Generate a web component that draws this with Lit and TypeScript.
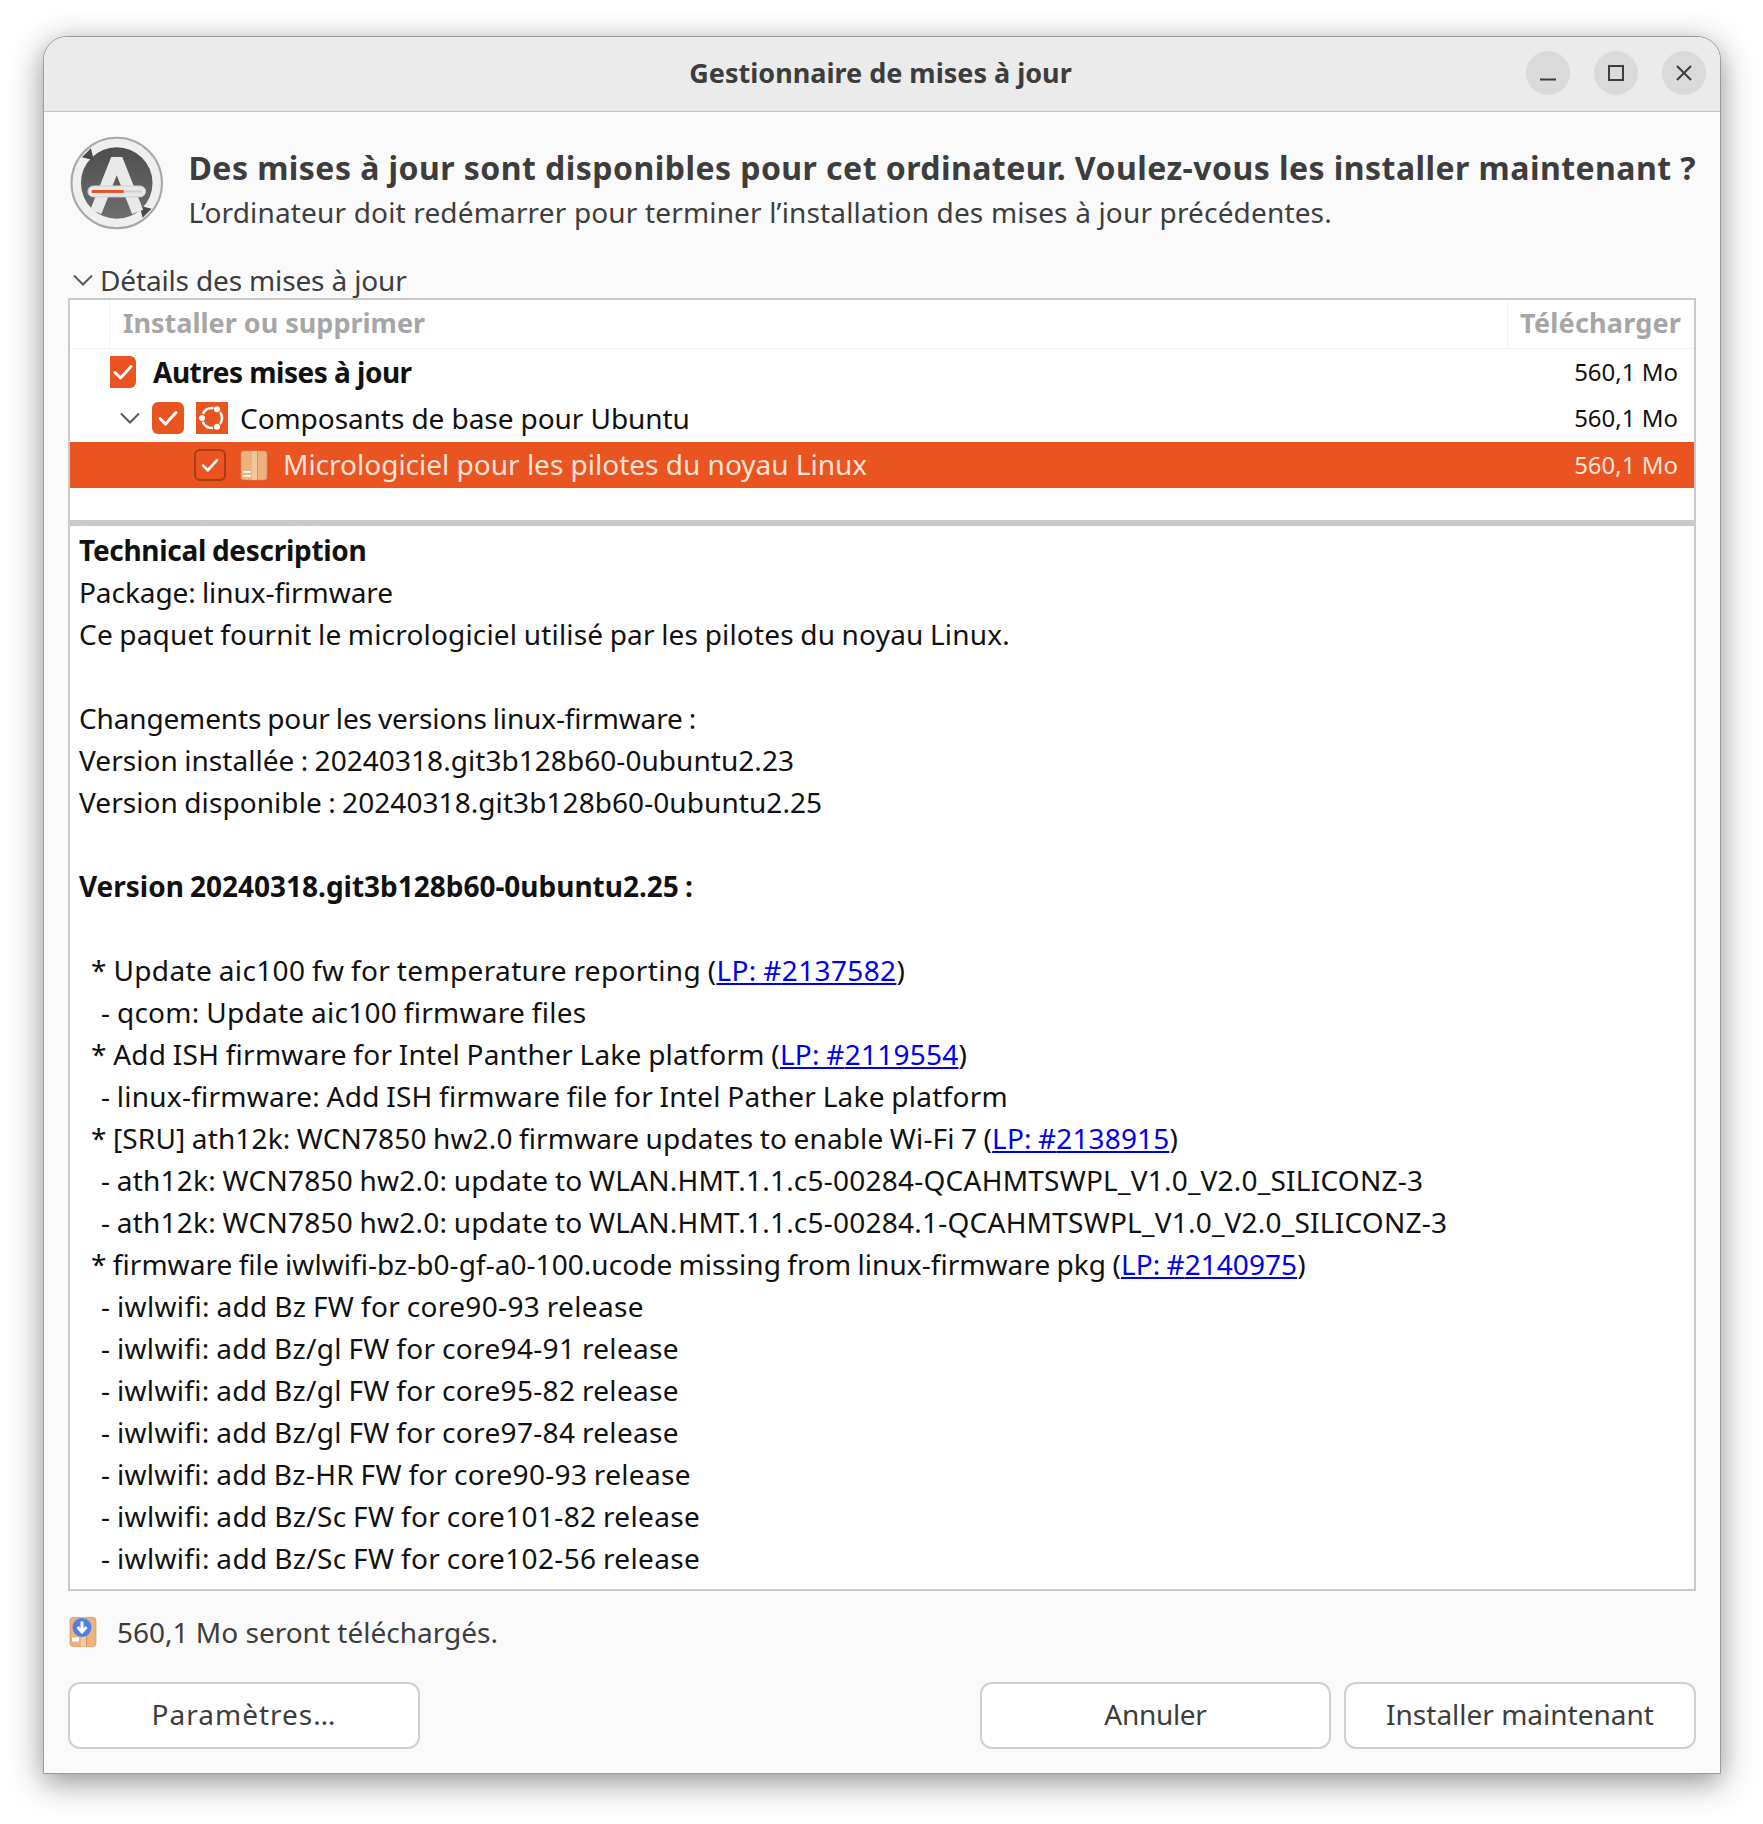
import { LitElement, css, html, svg } from 'lit';
import { customElement } from 'lit/decorators.js';

const lp = (n: string) => html`<a href="#">LP: #${n}</a>`;

const check = svg`<path d="M8 16.5l5.5 5.5L24 10.5" fill="none" stroke="#fff" stroke-width="3" stroke-linecap="round" stroke-linejoin="round"/>`;

const chevron = html`<svg class="chev" width="20" height="12" viewBox="0 0 20 12"><path d="M1 1.5l9 9 9-9" fill="none" stroke="#5a5a5a" stroke-width="2"/></svg>`;

const pkg = svg`
   <rect x="1" y="1" width="26" height="29" rx="3" fill="#eeb27e" stroke="#c98d5c" stroke-opacity=".6"/>
   <rect x="12" y="1" width="5" height="29" fill="#f3c79d"/>
   <rect x="17" y="1" width="1" height="29" fill="#cf935f"/>`;

// lines of the technical description, ls = letter-spacing to fit the line width
const details = [
   { ls: -0.3, t: html`<b>Technical description</b>` },
   { ls: -0.07, t: html`Package: linux-firmware` },
   { ls: 0.18, t: html`Ce paquet fournit le micrologiciel utilisé par les pilotes du noyau Linux.` },
   { t: '' },
   { ls: -0.15, t: html`Changements pour les versions linux-firmware :` },
   { ls: 0.05, t: html`Version installée : 20240318.git3b128b60-0ubuntu2.23` },
   { ls: 0.07, t: html`Version disponible : 20240318.git3b128b60-0ubuntu2.25` },
   { t: '' },
   { ls: -0.02, t: html`<b>Version 20240318.git3b128b60-0ubuntu2.25 :</b>` },
   { t: '' },
   { i: 1, ls: 0.36, t: html`* Update aic100 fw for temperature reporting (${lp('2137582')})` },
   { i: 2, ls: 0.29, t: html`- qcom: Update aic100 firmware files` },
   { i: 1, ls: 0.25, t: html`* Add ISH firmware for Intel Panther Lake platform (${lp('2119554')})` },
   { i: 2, ls: 0.25, t: html`- linux-firmware: Add ISH firmware file for Intel Pather Lake platform` },
   { i: 1, ls: 0.14, t: html`* [SRU] ath12k: WCN7850 hw2.0 firmware updates to enable Wi-Fi 7 (${lp('2138915')})` },
   { i: 2, ls: 0.23, t: html`- ath12k: WCN7850 hw2.0: update to WLAN.HMT.1.1.c5-00284-QCAHMTSWPL_V1.0_V2.0_SILICONZ-3` },
   { i: 2, ls: 0.23, t: html`- ath12k: WCN7850 hw2.0: update to WLAN.HMT.1.1.c5-00284.1-QCAHMTSWPL_V1.0_V2.0_SILICONZ-3` },
   { i: 1, ls: 0.05, t: html`* firmware file iwlwifi-bz-b0-gf-a0-100.ucode missing from linux-firmware pkg (${lp('2140975')})` },
   { i: 2, ls: 0.35, t: html`- iwlwifi: add Bz FW for core90-93 release` },
   { i: 2, ls: 0.33, t: html`- iwlwifi: add Bz/gl FW for core94-91 release` },
   { i: 2, ls: 0.33, t: html`- iwlwifi: add Bz/gl FW for core95-82 release` },
   { i: 2, ls: 0.33, t: html`- iwlwifi: add Bz/gl FW for core97-84 release` },
   { i: 2, ls: 0.32, t: html`- iwlwifi: add Bz-HR FW for core90-93 release` },
   { i: 2, ls: 0.34, t: html`- iwlwifi: add Bz/Sc FW for core101-82 release` },
   { i: 2, ls: 0.34, t: html`- iwlwifi: add Bz/Sc FW for core102-56 release` },
];

@customElement('app-root')
export class AppRoot extends LitElement {
   static get styles() {
      return css`
         :host {
            display: block;
            padding: 36px 42px 50px 43px;
            background: #fff;
            font-family: 'Noto Sans', sans-serif;
            font-size: 28px;
            color: #3d3d3d;
         }

         .window {
            width: 1678px;
            height: 1738px;
            box-sizing: border-box;
            display: flex;
            flex-direction: column;
            background: #fafafa;
            border: 1.5px solid #9c9c9c;
            border-radius: 24px 24px 0 0;
            box-shadow: 0 8px 32px rgba(0, 0, 0, 0.45);
         }

         .titlebar {
            height: 74px;
            flex: none;
            box-sizing: content-box;
            display: flex;
            align-items: center;
            justify-content: center;
            position: relative;
            background: #ebebeb;
            border-bottom: 1.5px solid #c4c4c4;
            border-radius: 23px 23px 0 0;
            font-weight: 700;
            font-size: 27px;
         }

         .title {
            margin: 0 3px 4px 0;
         }

         .winbtns {
            position: absolute;
            right: 14px;
            top: 14px;
            display: flex;
            gap: 24px;
         }

         .winbtn {
            width: 44px;
            height: 44px;
            border-radius: 50%;
            background: #dadada;
            display: flex;
            align-items: center;
            justify-content: center;
         }

         .content {
            flex: 1;
            min-height: 0;
            display: flex;
            flex-direction: column;
            padding: 24px 24px 24px 24px;
         }

         .head {
            display: flex;
            gap: 25px;
            height: 110px;
            flex: none;
            margin-left: 2px;
         }

         .head-text {
            display: flex;
            flex-direction: column;
            padding-top: 10px;
         }

         h1 {
            margin: 0;
            font-size: 32px;
            line-height: 44px;
            font-weight: 700;
            letter-spacing: 0.45px;
            white-space: nowrap;
         }

         .sub {
            font-size: 28px;
            line-height: 40px;
            margin-top: 2px;
            letter-spacing: 0.16px;
         }

         .expander {
            display: flex;
            align-items: center;
            gap: 7px;
            height: 36px;
            margin-top: 16px;
            font-size: 28px;
            padding-left: 5px;
            letter-spacing: -0.15px;
         }

         .listbox {
            flex: none;
            height: 222px;
            box-sizing: border-box;
            background: #fff;
            border: 2px solid #c9c9c9;
            border-bottom: none;
         }

         .thead {
            display: flex;
            height: 49px;
            box-sizing: border-box;
            border-bottom: 1px solid #f4f4f4;
            color: #a6a6a6;
            font-weight: 700;
            font-size: 27px;
            line-height: 46px;
         }

         .th-first {
            width: 39px;
            border-right: 1px solid #f4f4f4;
         }

         .th-name {
            flex: 1;
            padding-left: 13px;
         }

         .th-size {
            width: 187px;
            padding-right: 13px;
            box-sizing: border-box;
            text-align: right;
            border-left: 1px solid #f4f4f4;
            letter-spacing: 0.2px;
         }

         .row {
            display: flex;
            align-items: center;
            height: 46px;
            color: #111;
         }

         .row.selected {
            background: #e95420;
            color: #fde3d8;
         }

         .row .name {
            flex: 1;
            white-space: nowrap;
            padding-bottom: 1px;
         }

         .row .size {
            font-size: 24px;
            font-weight: 400;
            padding: 0 16px 2px 0;
         }

         .r1 {
            padding-left: 40px;
         }

         .r1 .name {
            font-weight: 700;
            letter-spacing: -0.5px;
         }

         .r2 {
            padding-left: 50px;
            margin-bottom: 1px;
         }

         .r2 .name {
            letter-spacing: -0.07px;
         }

         .r3 {
            padding-left: 124px;
         }

         .r3 .name {
            padding-bottom: 3px;
         }

         .cb {
            flex: none;
            width: 32px;
            height: 32px;
            border-radius: 6px;
            background: #e95420;
         }

         .cb.clip {
            width: 26px;
            border-radius: 0 6px 6px 0;
         }

         .cb.sel {
            box-sizing: border-box;
            border: 2px solid #a83c14;
         }

         .r1 .cb {
            margin-right: 17px;
         }

         .r2 .chev {
            margin-right: 12px;
         }

         .r2 .cb {
            margin-right: 12px;
         }

         .r2 svg.ico {
            margin-right: 12px;
         }

         .r3 .cb {
            margin-right: 14px;
         }

         .r3 svg.ico {
            margin-right: 15px;
         }

         .sash {
            flex: none;
            height: 6px;
            background: #c9c9c9;
         }

         .textview {
            flex: 1;
            min-height: 0;
            overflow: hidden;
            background: #fff;
            border: 2px solid #c9c9c9;
            border-top: none;
            padding: 3px 9px;
            color: #111;
            font-size: 28px;
            line-height: 42px;
            word-spacing: -1px;
         }

         .line {
            height: 42px;
            white-space: nowrap;
         }

         .i1 {
            padding-left: 12px;
         }

         .i2 {
            padding-left: 22px;
         }

         a {
            color: #0000ee;
         }

         .status {
            flex: none;
            display: flex;
            align-items: center;
            gap: 20px;
            height: 91px;
            box-sizing: border-box;
            padding: 0 0 9px 1px;
         }

         .buttons {
            flex: none;
            display: flex;
         }

         button {
            width: 351px;
            height: 67px;
            border: 2px solid #cfcfcf;
            border-radius: 12px;
            background: #fff;
            font: inherit;
            color: #3d3d3d;
            padding: 0 0 3px;
         }

         .wide {
            width: 352px;
            letter-spacing: 1px;
         }

         .tight {
            letter-spacing: -0.3px;
            margin-right: 13px;
         }

         .install {
            width: 352px;
         }

         .spacer {
            flex: 1;
         }
      `;
   }

   renderLogo() {
      return html`<svg width="94" height="94" viewBox="0 0 94 94">
         <defs>
            <linearGradient id="disc" x1="0" y1="0" x2="0" y2="1">
               <stop offset="0" stop-color="#4e4e4e" />
               <stop offset="1" stop-color="#6e6e6e" />
            </linearGradient>
         </defs>
         <circle cx="47" cy="47" r="45.5" fill="#efefef" stroke="#a8a8a8" stroke-width="2" />
         <circle cx="47" cy="47" r="36" fill="url(#disc)" />
         <path d="M12 21l9-9 3 12z M82 73l-9 9-3-12z" fill="#4a4a4a" />
         <path d="M26 76L47 23L68 76" stroke="#e9e9e9" stroke-width="12" stroke-linejoin="bevel" fill="none" />
         <rect x="18" y="50" width="58" height="11" rx="5.5" fill="#e8e8e8" stroke="#cfcfcf" />
         <rect x="22" y="54.500" width="50" height="2" fill="#cfcfcf" />
         <rect x="22" y="54" width="32" height="3" fill="#e95420" />
      </svg>`;
   }

   render() {
      return html`<div class="window">
         <div class="titlebar">
            <span class="title">Gestionnaire de mises à jour</span>
            <div class="winbtns">
               <div class="winbtn">
                  <svg width="18" height="18" viewBox="0 0 18 18"><path d="M1 15.500h16" stroke="#3d3d3d" stroke-width="2" /></svg>
               </div>
               <div class="winbtn">
                  <svg width="18" height="18" viewBox="0 0 18 18"><rect x="2" y="2" width="14" height="14" fill="none" stroke="#3d3d3d" stroke-width="2" /></svg>
               </div>
               <div class="winbtn">
                  <svg width="18" height="18" viewBox="0 0 18 18"><path d="M2 2l14 14M16 2L2 16" stroke="#3d3d3d" stroke-width="2" /></svg>
               </div>
            </div>
         </div>

         <div class="content">
            <div class="head">
               ${this.renderLogo()}
               <div class="head-text">
                  <h1>Des mises à jour sont disponibles pour cet ordinateur. Voulez-vous les installer maintenant ?</h1>
                  <div class="sub">L’ordinateur doit redémarrer pour terminer l’installation des mises à jour précédentes.</div>
               </div>
            </div>

            <div class="expander">${chevron}<span>Détails des mises à jour</span></div>

            <div class="listbox">
               <div class="thead">
                  <div class="th-first"></div>
                  <div class="th-name">Installer ou supprimer</div>
                  <div class="th-size">Télécharger</div>
               </div>
               <div class="row r1">
                  <svg class="cb clip" viewBox="0 0 26 32">${svg`<path d="M5 16.500l5.500 5.500L21 10.500" fill="none" stroke="#fff" stroke-width="3" stroke-linecap="round" stroke-linejoin="round"/>`}</svg>
                  <span class="name">Autres mises à jour</span><span class="size">560,1 Mo</span>
               </div>
               <div class="row r2">
                  ${chevron}
                  <svg class="cb" viewBox="0 0 32 32">${check}</svg>
                  <svg class="ico" width="32" height="32" viewBox="0 0 32 32">
                     <rect width="32" height="32" fill="#e95420" />
                     <circle cx="16" cy="16" r="10" fill="none" stroke="#fff" stroke-width="2.500" stroke-dasharray="13 7.940" stroke-dashoffset="-14.400" />
                     <circle cx="21" cy="7.300" r="3" fill="#fff" />
                     <circle cx="6" cy="16" r="3" fill="#fff" />
                     <circle cx="21" cy="24.700" r="3" fill="#fff" />
                  </svg>
                  <span class="name">Composants de base pour Ubuntu</span><span class="size">560,1 Mo</span>
               </div>
               <div class="row r3 selected">
                  <svg class="cb sel" viewBox="0 0 32 32">${check}</svg>
                  <svg class="ico" width="28" height="31" viewBox="0 0 28 31">
                     ${pkg}
                     <rect x="3" y="21" width="8" height="2" fill="#fff" fill-opacity=".8" />
                     <rect x="3" y="25" width="8" height="2" fill="#fff" fill-opacity=".8" />
                  </svg>
                  <span class="name">Micrologiciel pour les pilotes du noyau Linux</span><span class="size">560,1 Mo</span>
               </div>
            </div>
            <div class="sash"></div>

            <div class="textview">
               ${details.map(
                  (d) =>
                     html`<div
                        class="line ${d.i ? 'i' + d.i : ''}"
                        style="letter-spacing: ${d.ls ?? 0}px"
                     >
                        ${d.t}
                     </div>`
               )}
            </div>

            <div class="status">
               <svg width="28" height="32" viewBox="0 0 28 31">
                  ${pkg}
                  <circle cx="13" cy="11" r="9.500" fill="#4f7fe8" />
                  <path d="M13 5v10M8.500 10.500L13 15.500l4.500-5" stroke="#fff" stroke-width="3" fill="none" />
                  <rect x="3" y="21" width="7" height="4" fill="#fff" />
               </svg>
               <span>560,1 Mo seront téléchargés.</span>
            </div>

            <div class="buttons">
               <button class="wide">Paramètres…</button>
               <div class="spacer"></div>
               <button class="tight">Annuler</button>
               <button class="install">Installer maintenant</button>
            </div>
         </div>
      </div>`;
   }
}
